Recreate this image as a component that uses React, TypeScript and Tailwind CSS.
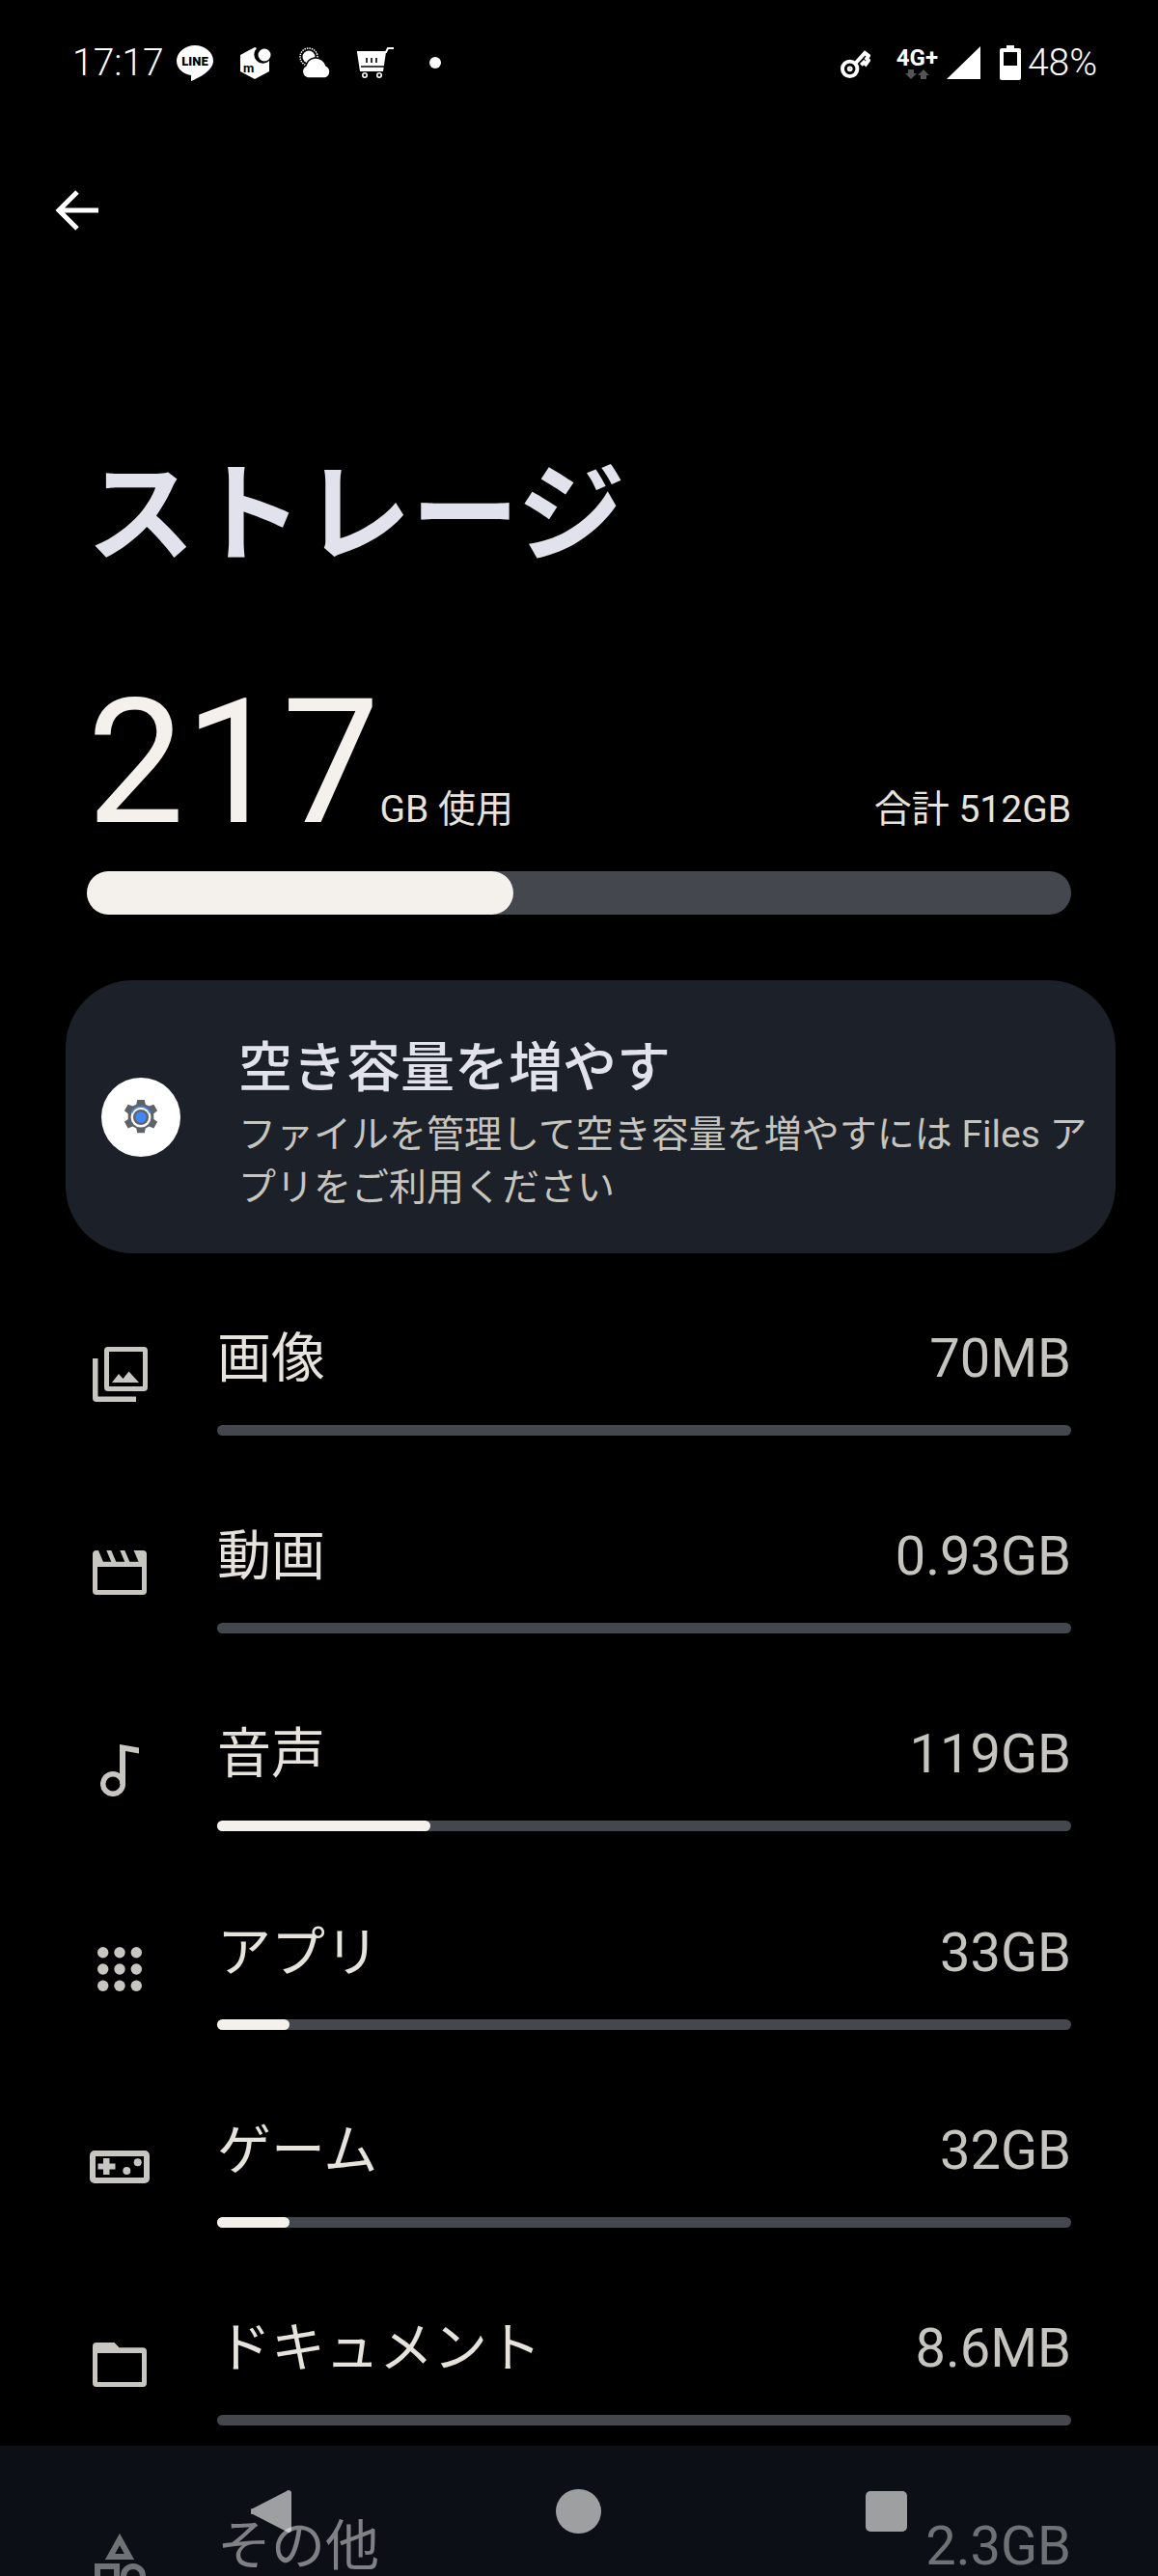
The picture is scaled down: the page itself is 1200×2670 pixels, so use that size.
import type { ReactNode } from "react";

const jp = "font-['Roboto','Noto_Sans_CJK_JP',sans-serif]";

const rows: { name: string; size: string; used: number; icon: ReactNode }[] = [
  { name: "画像", size: "70MB", used: 0, icon: <ImagesIcon /> },
  { name: "動画", size: "0.93GB", used: 0, icon: <MovieIcon /> },
  { name: "音声", size: "119GB", used: 25, icon: <MusicIcon /> },
  { name: "アプリ", size: "33GB", used: 8.5, icon: <AppsIcon /> },
  { name: "ゲーム", size: "32GB", used: 8.5, icon: <GameIcon /> },
  { name: "ドキュメント", size: "8.6MB", used: 0, icon: <FolderIcon /> },
  { name: "その他", size: "2.3GB", used: 0, icon: <OtherIcon /> },
];

export default function App() {
  return (
    <div className={`relative h-[2670px] w-[1200px] overflow-hidden bg-black ${jp}`}>
      <StatusBar />
      <div className="mt-[109px] pl-[56px]">
        <svg viewBox="0 0 48 48" className="h-[48px] w-[48px]" fill="none" stroke="#fff" strokeWidth="5">
          <path d="M46 24H6M24 5 5 24l19 19" />
        </svg>
      </div>
      <h1 className="mt-[223px] pl-[90px] text-[112px] leading-[140px] font-bold text-[#e1e2ec]">ストレージ</h1>

      <div className="mt-[96px] px-[90px]">
        <div className="flex items-baseline justify-between">
          <div className="flex items-baseline">
            <span className="text-[180px] leading-[180px] text-[#f4f1ec]">217</span>
            <span className="text-[39px] leading-[50px] text-[#e6e2dc]">GB 使用</span>
          </div>
          <span className="text-[39px] leading-[50px] text-[#e6e2dc]">合計 512GB</span>
        </div>
        <div className="mt-[22px] h-[45px] rounded-full bg-[#44484e]">
          <div className="h-full w-[442px] rounded-full bg-[#f4f1ec]" />
        </div>
      </div>

      <div className="mt-[68px] mr-[44px] ml-[68px] flex h-[283px] items-center rounded-[70px] bg-[#1c2129] pl-[37px]">
        <div className="flex h-[82px] w-[82px] shrink-0 items-center justify-center rounded-full bg-white">
          <GearIcon />
        </div>
        <div className="ml-[60px] pt-[19px] pr-[26px]">
          <div className="text-[56px] leading-[62px] font-medium text-[#e1e2ec]">空き容量を増やす</div>
          <div className="mt-[11px] text-[39px] leading-[55px] text-[#c6c4be]">
            ファイルを管理して空き容量を増やすには Files アプリをご利用ください
          </div>
        </div>
      </div>

      <div className="mt-[27px] px-[90px]">
        {rows.map((row) => (
          <Row key={row.name} {...row} />
        ))}
      </div>

      <div className="absolute inset-x-0 bottom-0 flex h-[135px] items-start justify-center gap-[274px] bg-[#181f2c]/50 pt-[45px]">
        <svg viewBox="0 0 42 46" className="h-[46px] w-[42px]">
          <path d="M37 2 2 20a3 3 0 0 0 0 6l35 18a3 3 0 0 0 5-3V5a3 3 0 0 0-5-3Z" fill="#fff" fillOpacity="0.6" />
        </svg>
        <div className="h-[46px] w-[47px] rounded-full bg-white/60" />
        <div className="mt-[2px] h-[42px] w-[43px] rounded-[5px] bg-white/60" />
      </div>
    </div>
  );
}

function Row({ name, size, used, icon }: { name: string; size: string; used: number; icon: ReactNode }) {
  return (
    <div className="flex h-[205.3px] items-center">
      <div className="mb-[8px] w-[135px] shrink-0">
        <div className="flex w-[68px] justify-center">{icon}</div>
      </div>
      <div className="min-w-0 flex-1">
        <div className="flex items-center justify-between">
          <span className="text-[56px] leading-[76px] text-[#e6e2dc]">{name}</span>
          <span className="text-[56px] leading-[76px] text-[#c6c4be]">{size}</span>
        </div>
        <div className="mt-[31px] h-[11px] rounded-full bg-[#44484e]">
          {used > 0 && <div className="h-full rounded-full bg-[#f4f1ec]" style={{ width: `${used}%` }} />}
        </div>
      </div>
    </div>
  );
}

function StatusBar() {
  return (
    <div className="mt-[45px] flex h-[40px] items-center justify-between pr-[63px] pl-[75px] text-white">
      <div className="flex items-center">
        <span className="w-[96px] text-[39px] leading-[40px] font-light">17:17</span>
        <svg viewBox="0 0 40 40" className="ml-[11px] h-[40px] w-[40px]">
          <path d="M20 2C10 2 1 9 1 18c0 9 8 14 15 15l0 6c8-3 23-11 23-21C39 9 30 2 20 2Z" fill="#fff" />
          <text x="20" y="23" fontSize="13" fontWeight="900" textAnchor="middle" fill="#000" fontFamily="Roboto">LINE</text>
        </svg>
        <svg viewBox="0 0 32 34" className="ml-[27px] h-[34px] w-[32px]">
          <path d="M15 1 0 9v17l15 8 15-8V15a9 9 0 0 1-13-13Z" fill="#fff" />
          <circle cx="25" cy="9" r="6.5" fill="#fff" />
          <text x="3" y="27" fontSize="13" fontWeight="700" fill="#000" fontFamily="Roboto">m</text>
        </svg>
        <svg viewBox="0 0 34 32" className="ml-[29px] h-[32px] w-[34px]">
          <circle cx="10" cy="10" r="9" fill="none" stroke="#fff" strokeWidth="1.5" strokeDasharray="1.5 1" />
          <circle cx="10" cy="10" r="6.5" fill="#fff" />
          <path d="M9 32a7 7 0 0 1-2-13 11 11 0 0 1 9-8 11 11 0 0 1 12 8 7 7 0 0 1-1 13Z" fill="#fff" stroke="#000" strokeWidth="1.5" />
        </svg>
        <svg viewBox="0 0 38 32" className="ml-[26px] h-[32px] w-[38px]">
          <path d="M0 5h30l2-4h6" fill="none" stroke="#fff" strokeWidth="2" />
          <path d="M0 5h30l-3 20H3Z" fill="#fff" />
          <path d="M10 11v5M15 11v5M20 11v5" stroke="#000" strokeWidth="1.6" />
          <path d="M4 20h24" stroke="#000" strokeWidth="1.5" />
          <circle cx="8" cy="29" r="2.2" fill="none" stroke="#fff" strokeWidth="1.6" />
          <circle cx="23" cy="29" r="2.2" fill="none" stroke="#fff" strokeWidth="1.6" />
        </svg>
        <div className="ml-[37px] h-[12px] w-[12px] rounded-full bg-white" />
      </div>
      <div className="flex items-center">
        <svg viewBox="0 0 32 32" className="h-[31px] w-[31px]" fill="none" stroke="#fff" strokeWidth="4">
          <circle cx="10" cy="22" r="8" />
          <path d="M16 16 26 5l4 3-2 3 2 2-3 4-2-2-3 3" />
          <circle cx="10" cy="22" r="1" fill="#fff" />
        </svg>
        <div className="ml-[25px] flex w-[47px] flex-col items-center">
          <span className="text-[24px] leading-[24px] font-bold">4G+</span>
          <svg viewBox="0 0 25 10" className="h-[10px] w-[25px]" fill="#555">
            <path d="M3 0h6v4h3L6 10 0 4h3ZM13 6l6-6 6 6h-3v4h-6V6Z" />
          </svg>
        </div>
        <svg viewBox="0 0 35 34" className="ml-[7px] h-[34px] w-[35px]">
          <path d="M0 34 35 0v34Z" fill="#fff" />
        </svg>
        <svg viewBox="0 0 22 36" className="ml-[20px] h-[36px] w-[22px]">
          <path d="M7 0h8v3h5a2 2 0 0 1 2 2v29a2 2 0 0 1-2 2H2a2 2 0 0 1-2-2V5a2 2 0 0 1 2-2h5Z" fill="#fff" />
          <rect x="4" y="7" width="14" height="14" fill="#000" />
        </svg>
        <span className="ml-[7px] text-[39px] leading-[40px] font-light">48%</span>
      </div>
    </div>
  );
}

function GearIcon() {
  return (
    <svg viewBox="0 0 40 40" className="h-[38px] w-[38px]">
      <path
        fill="#5f6368"
        d="M16 1h8l1 5 4 2 5-2 4 7-4 3v6l4 3-4 7-5-2-4 2-1 5h-8l-1-5-4-2-5 2-4-7 4-3v-6l-4-3 4-7 5 2 4-2Z"
      />
      <circle cx="20" cy="20" r="11" fill="#fff" />
      <circle cx="20" cy="20" r="8.500" fill="#5f6368" />
      <circle cx="20" cy="20" r="6" fill="#4285f4" />
      <path d="M10 15a11 11 0 0 1 20 0" fill="none" stroke="#4285f4" strokeWidth="2" />
    </svg>
  );
}

function ImagesIcon() {
  return (
    <svg viewBox="0 0 57 57" className="h-[57px] w-[57px] text-[#c8c6c1]" fill="currentColor">
      <path fillRule="evenodd" d="M16 0h37a4 4 0 0 1 4 4v38a4 4 0 0 1-4 4H16a4 4 0 0 1-4-4V4a4 4 0 0 1 4-4Zm1 5v36h35V5Z" />
      <path d="M0 12h5.500v39.500H45V57H4a4 4 0 0 1-4-4Z" />
      <path d="m20 37 7-9 4.500 5 6-7.500L48 37Z" />
    </svg>
  );
}

function MovieIcon() {
  return (
    <svg viewBox="0 0 56 46" className="h-[46px] w-[56px] text-[#c8c6c1]" fill="currentColor">
      <path
        fillRule="evenodd"
        d="M4 0h48a4 4 0 0 1 4 4v38a4 4 0 0 1-4 4H4a4 4 0 0 1-4-4V4a4 4 0 0 1 4-4ZM5 17v24h46V17ZM6 0h8.300l5 11.700h-8.400ZM19.300 0h9l5 11.700h-9ZM33.300 0h9.300l5 11.700h-9.300Z"
      />
    </svg>
  );
}

function MusicIcon() {
  return (
    <svg viewBox="0 0 40 54" className="h-[54px] w-[40px] text-[#c8c6c1]" fill="currentColor">
      <circle cx="13" cy="41" r="10.300" fill="none" stroke="currentColor" strokeWidth="5.500" />
      <path d="M20 0 40 3.500v6L26 7v34h-6Z" />
    </svg>
  );
}

function AppsIcon() {
  return (
    <svg viewBox="0 0 46 46" className="h-[46px] w-[46px] text-[#c8c6c1]" fill="currentColor">
      {[5.7, 23, 40.3].flatMap((y) => [5.7, 23, 40.3].map((x) => <circle key={`${x}-${y}`} cx={x} cy={y} r="5.7" />))}
    </svg>
  );
}

function GameIcon() {
  return (
    <svg viewBox="0 0 62 34" className="h-[34px] w-[62px] text-[#c8c6c1]" fill="currentColor">
      <path fillRule="evenodd" d="M5 0h52a5 5 0 0 1 5 5v24a5 5 0 0 1-5 5H5a5 5 0 0 1-5-5V5a5 5 0 0 1 5-5Zm1 6v22h50V6Z" />
      <path d="M14 8h6.500v5.500h6v6h-6V25H14v-5.500H8.500v-6H14Z" />
      <circle cx="38.300" cy="21" r="4" />
      <circle cx="49.700" cy="12.300" r="4" />
    </svg>
  );
}

function FolderIcon() {
  return (
    <svg viewBox="0 0 56 46" className="h-[46px] w-[56px] text-[#c8c6c1]" fill="currentColor">
      <path fillRule="evenodd" d="M4 0h18.500l5 5.300H52a4 4 0 0 1 4 4V42a4 4 0 0 1-4 4H4a4 4 0 0 1-4-4V4a4 4 0 0 1 4-4Zm1 11v30h46V11Z" />
    </svg>
  );
}

function OtherIcon() {
  return (
    <svg viewBox="0 0 60 60" className="h-[60px] w-[60px] text-[#c8c6c1]" fill="none" stroke="currentColor" strokeWidth="6">
      <path d="M30 6 40 24H20Z" />
      <rect x="7" y="34" width="20" height="20" />
      <circle cx="44" cy="44" r="10" />
    </svg>
  );
}
